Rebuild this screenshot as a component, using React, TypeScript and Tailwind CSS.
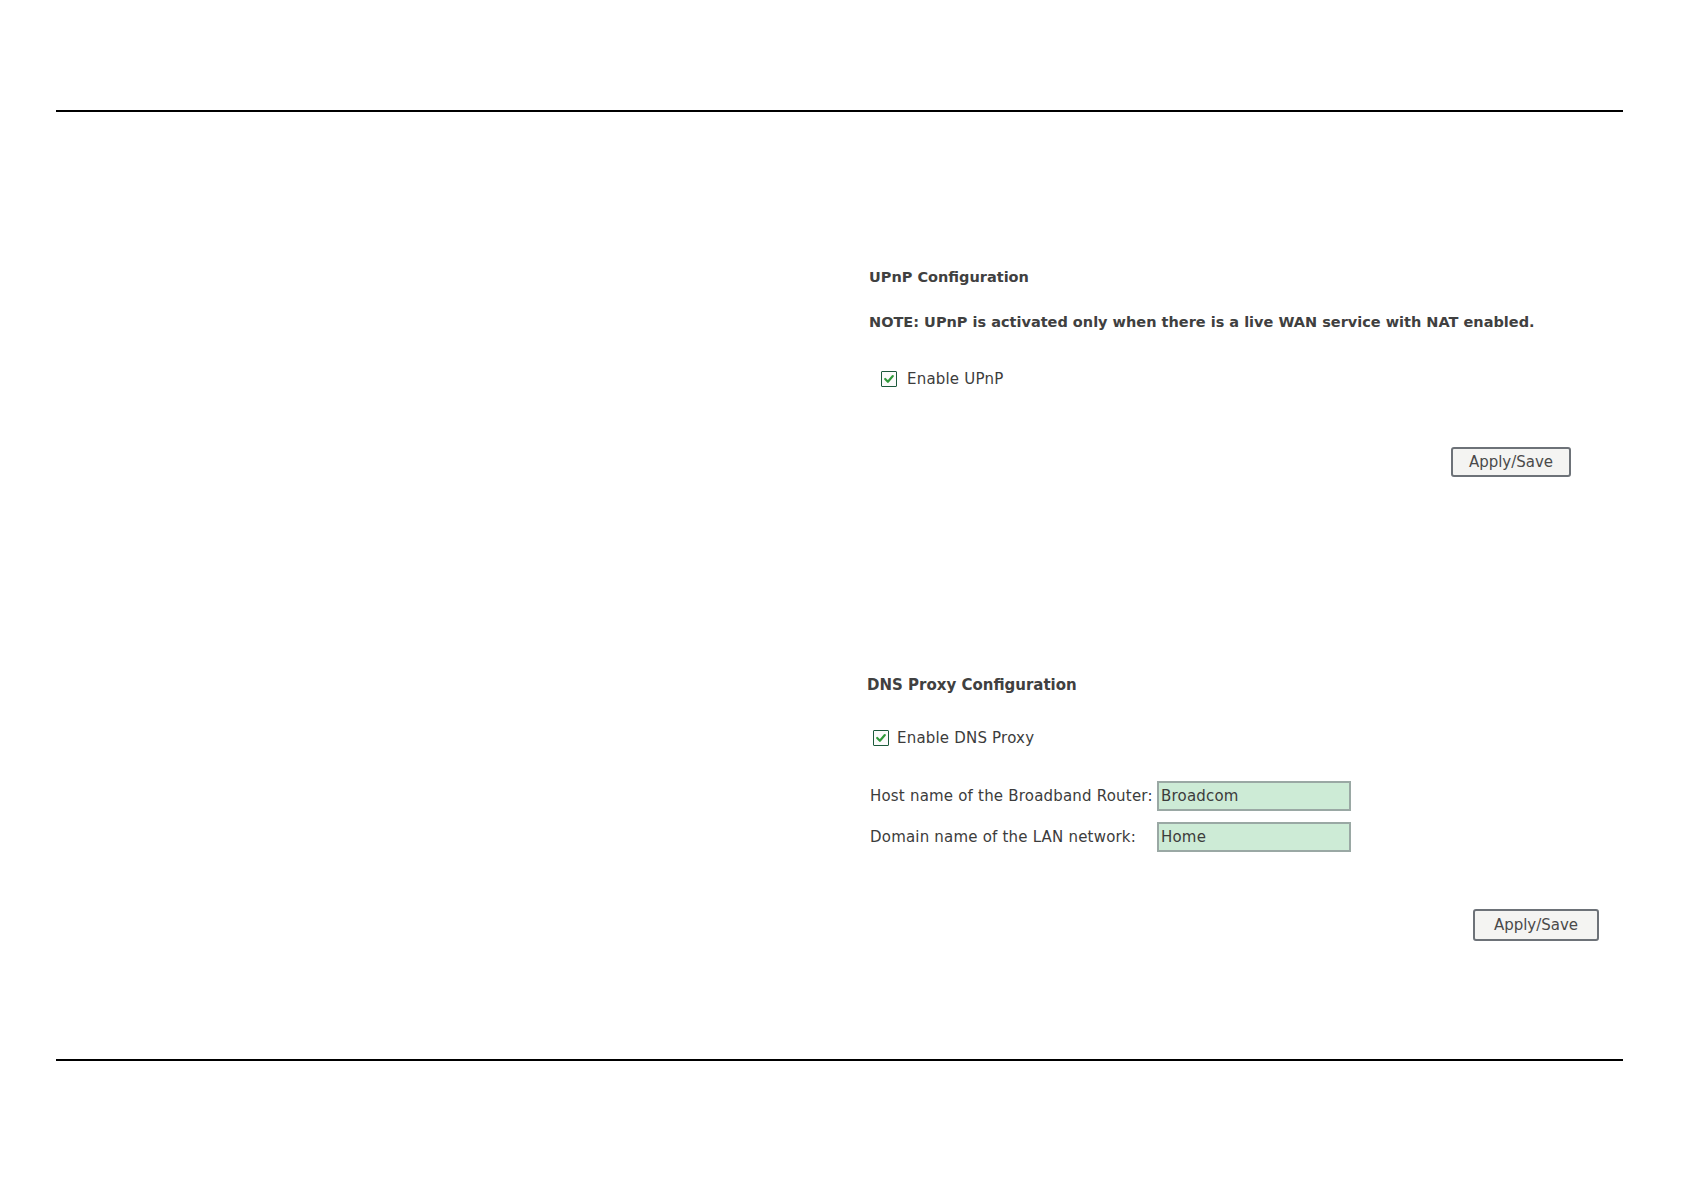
import React from "react";

function Check() {
  return (
    <span className="inline-flex items-center justify-center w-[16px] h-[16px] border border-[#1c5a3c] bg-[#fbfbfb] rounded-[1px] shrink-0">
      <svg width="12" height="12" viewBox="0 0 11 11">
        <path d="M2 5.5 L4.5 8 L9 2.8" fill="none" stroke="#2f9a3a" strokeWidth="2" strokeLinecap="round" strokeLinejoin="round" />
      </svg>
    </span>
  );
}

function Btn() {
  return (
    <button className="h-full w-full rounded-[3px] border-2 border-[#6d7278] bg-[#f4f4f2] text-[15px] text-[#4a4a4a] leading-none">
      Apply/Save
    </button>
  );
}

export default function App() {
  return (
    <div
      className="w-[1685px] h-[1192px] bg-white text-[#3c3c3c] overflow-hidden flex flex-col"
      style={{ fontFamily: '"DejaVu Sans", Verdana, sans-serif' }}
    >
      <div className="h-[110px] shrink-0" />
      <div className="ml-[56px] w-[1567px] h-[2px] bg-black shrink-0" />
      <div className="pl-[869px] h-[947px] shrink-0 flex flex-col items-start">
        <div className="mt-[155px] h-[20px] leading-[20px] text-[14.5px] font-bold text-[#404040]">UPnP Configuration</div>
        <div className="mt-[25px] h-[20px] leading-[20px] text-[14.5px] font-bold text-[#404040]">
          NOTE: UPnP is activated only when there is a live WAN service with NAT enabled.
        </div>
        <div className="mt-[37px] h-[20px] flex items-center gap-[10px] pl-[12px] text-[15px] tracking-[0.2px]">
          <Check />
          <span>Enable UPnP</span>
        </div>
        <div className="mt-[58px] w-[702px] flex justify-end">
          <div className="w-[120px] h-[30px]">
            <Btn />
          </div>
        </div>
        <div className="mt-[198px] -ml-[2px] h-[20px] leading-[20px] text-[15px] font-bold text-[#404040]">DNS Proxy Configuration</div>
        <div className="mt-[33px] h-[20px] flex items-center gap-[8px] pl-[4px] text-[15px] tracking-[0.2px]">
          <Check />
          <span>Enable DNS Proxy</span>
        </div>
        <div className="mt-[33px] flex items-center text-[15px] tracking-[0.2px]">
          <span className="w-[288px] pl-[1px]">Host name of the Broadband Router:</span>
          <input
            readOnly
            value="Broadcom"
            className="w-[194px] h-[30px] border-2 border-[#9aa8a4] bg-[#cdebd6] px-[2px] text-[15px] text-[#3c3c3c] outline-none"
          />
        </div>
        <div className="mt-[11px] flex items-center text-[15px] tracking-[0.2px]">
          <span className="w-[288px] pl-[1px]">Domain name of the LAN network:</span>
          <input
            readOnly
            value="Home"
            className="w-[194px] h-[30px] border-2 border-[#9aa8a4] bg-[#cdebd6] px-[2px] text-[15px] text-[#3c3c3c] outline-none"
          />
        </div>
        <div className="mt-[57px] w-[730px] flex justify-end">
          <div className="w-[126px] h-[32px]">
            <Btn />
          </div>
        </div>
      </div>
      <div className="ml-[56px] w-[1567px] h-[2px] bg-black shrink-0" />
    </div>
  );
}
